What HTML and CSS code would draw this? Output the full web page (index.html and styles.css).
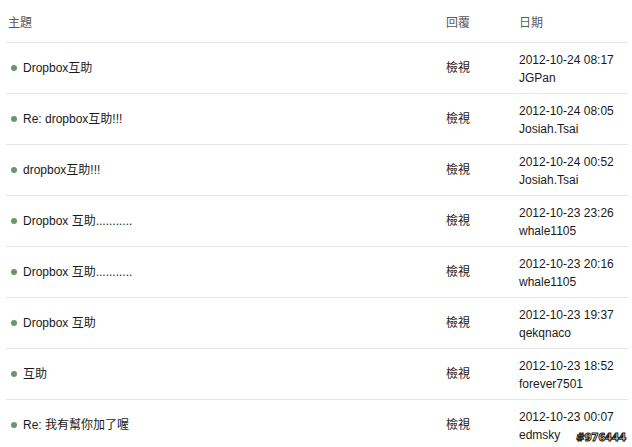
FILE: index.html
```html
<!DOCTYPE html>
<html>
<head>
<meta charset="utf-8">
<link rel="stylesheet" href="styles.css">
</head>
<body>
<div class="list">
  <div class="row head">
    <div class="c-subj">主題</div>
    <div class="c-reply">回覆</div>
    <div class="c-date">日期</div>
  </div>
  <div class="row">
    <div class="c-subj"><span class="dot"></span>Dropbox互助</div>
    <div class="c-reply">檢視</div>
    <div class="c-date"><div>2012-10-24 08:17</div><div>JGPan</div></div>
  </div>
  <div class="row">
    <div class="c-subj"><span class="dot"></span>Re: dropbox互助!!!</div>
    <div class="c-reply">檢視</div>
    <div class="c-date"><div>2012-10-24 08:05</div><div>Josiah.Tsai</div></div>
  </div>
  <div class="row">
    <div class="c-subj"><span class="dot"></span>dropbox互助!!!</div>
    <div class="c-reply">檢視</div>
    <div class="c-date"><div>2012-10-24 00:52</div><div>Josiah.Tsai</div></div>
  </div>
  <div class="row">
    <div class="c-subj"><span class="dot"></span>Dropbox 互助...........</div>
    <div class="c-reply">檢視</div>
    <div class="c-date"><div>2012-10-23 23:26</div><div>whale1105</div></div>
  </div>
  <div class="row">
    <div class="c-subj"><span class="dot"></span>Dropbox 互助...........</div>
    <div class="c-reply">檢視</div>
    <div class="c-date"><div>2012-10-23 20:16</div><div>whale1105</div></div>
  </div>
  <div class="row">
    <div class="c-subj"><span class="dot"></span>Dropbox 互助</div>
    <div class="c-reply">檢視</div>
    <div class="c-date"><div>2012-10-23 19:37</div><div>qekqnaco</div></div>
  </div>
  <div class="row">
    <div class="c-subj"><span class="dot"></span>互助</div>
    <div class="c-reply">檢視</div>
    <div class="c-date"><div>2012-10-23 18:52</div><div>forever7501</div></div>
  </div>
  <div class="row">
    <div class="c-subj"><span class="dot"></span>Re: 我有幫你加了喔</div>
    <div class="c-reply">檢視</div>
    <div class="c-date"><div>2012-10-23 00:07</div><div>edmsky</div></div>
  </div>
</div>
<div class="mark">#976444</div>
</body>
</html>
```
FILE: styles.css
```css
html, body {
  margin: 0;
  padding: 0;
  background: #fff;
  overflow: hidden;
}
body {
  font-family: "Liberation Sans", Arial, "Noto Sans CJK TC", sans-serif;
  font-size: 12px;
  color: #1a1a1a;
  width: 632px;
  height: 447px;
  position: relative;
}
.list {
  margin-left: 6px;
  width: 622px;
}
.row {
  display: grid;
  grid-template-columns: 440px 73px 1fr;
  align-items: center;
  height: 51px;
  box-sizing: border-box;
  padding-bottom: 1px;
  border-bottom: 1px solid #e6e6e6;
  line-height: 14px;
}
.row.head {
  height: 43px;
  padding-bottom: 0;
  padding-top: 4px;
  color: #5a5a5a;
}
.c-subj {
  display: flex;
  align-items: center;
  padding-left: 2px;
}
.dot {
  width: 6px;
  height: 6px;
  border-radius: 50%;
  background: #6b966b;
  margin-left: 3px;
  margin-right: 6px;
  flex: none;
}
.c-date {
  line-height: 18px;
  padding-top: 3px;
}
.row.head .c-date {
  padding-top: 0;
  line-height: 14px;
}
.mark {
  position: absolute;
  left: 576px;
  top: 431px;
  font-family: "DejaVu Sans", sans-serif;
  font-weight: bold;
  font-size: 10.5px;
  letter-spacing: -0.4px;
  color: #fff;
  -webkit-text-stroke: 1px #222;
}
```
